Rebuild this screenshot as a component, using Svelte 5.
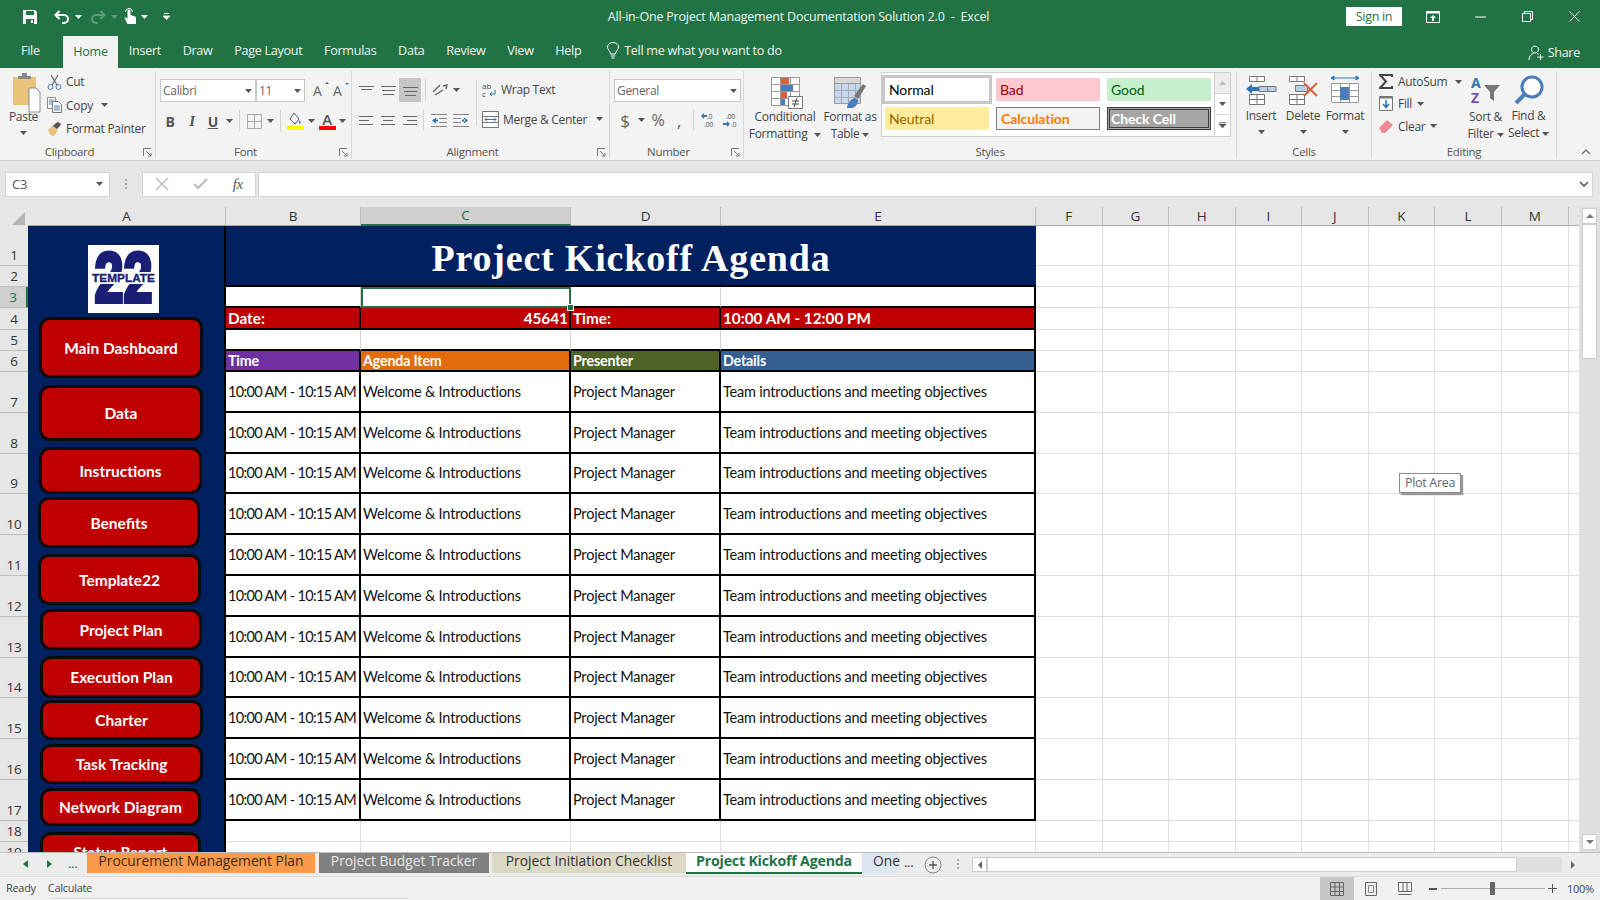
<script>
  const colW = [198, 135, 210, 150, 315, 66.5, 66.5, 66.5, 66.5, 66.5, 66.5, 67, 66.5, 11];
  const colNames = ['A', 'B', 'C', 'D', 'E', 'F', 'G', 'H', 'I', 'J', 'K', 'L', 'M', ''];
  const rowH = [40, 21, 21, 22, 21, 21, ...Array(11).fill(40.8), 21, 21];
  const gridCols = `28px ${colW.map((w) => w + 'px').join(' ')}`;
  const gridRows = `19px ${rowH.map((h) => h + 'px').join(' ')}`;

  const nav = [
    { label: 'Main Dashboard', top: 316, bottom: 377, left: 39, right: 203 },
    { label: 'Data', top: 384, bottom: 440, left: 39, right: 203 },
    { label: 'Instructions', top: 446, bottom: 493, left: 39, right: 202 },
    { label: 'Benefits', top: 496, bottom: 547, left: 38, right: 200 },
    { label: 'Template22', top: 553, bottom: 604, left: 38, right: 201 },
    { label: 'Project Plan', top: 608, bottom: 649, left: 40, right: 202 },
    { label: 'Execution Plan', top: 655, bottom: 697, left: 40, right: 203 },
    { label: 'Charter', top: 699, bottom: 739, left: 40, right: 203 },
    { label: 'Task Tracking', top: 743, bottom: 783, left: 40, right: 203 },
    { label: 'Network Diagram', top: 787, bottom: 825, left: 40, right: 201 },
    { label: 'Status Report', top: 831, bottom: 871, left: 40, right: 201 }
  ];
  const navStyle = (b, i) => {
    const prev = i ? nav[i - 1].bottom : 312;
    return `margin:${b.top - prev}px 0 0 ${b.left - 28}px;width:${b.right - b.left}px;height:${b.bottom - b.top}px`;
  };

  const agenda = Array.from({ length: 11 }, (_, i) => i + 8);
  const rows = Array.from({ length: 19 }, (_, i) => i + 2);
  const cols = Array.from({ length: 14 }, (_, i) => i + 2);
  const at = (r, c) => `grid-area:${r}/${c}`;
  const tabs = ['File', 'Home', 'Insert', 'Draw', 'Page Layout', 'Formulas', 'Data', 'Review', 'View', 'Help'];
</script>

{#snippet caret(color = '#555')}
  <svg class="caret" width="7" height="4" viewBox="0 0 7 4"><path d="M0 0h7L3.500 4z" fill={color} /></svg>
{/snippet}

{#snippet launcher()}
  <svg class="launch" width="9" height="9" viewBox="0 0 9 9"><path d="M.5 8V.5H8M3 3l5 5M8 5v3H5" fill="none" stroke="#777" /></svg>
{/snippet}

<div class="app">
  <header class="titlebar">
    <div class="qat">
      <svg class="q-save" width="16" height="16" viewBox="0 0 16 16"><path d="M1 1h12l2 2v12H1z" fill="#fff" /><path d="M4 2h8v4H4zM4 10h8v5H4z" fill="#217346" /><path d="M9 11h2v3H9z" fill="#fff" /></svg>
      <svg class="q-undo" width="16" height="14" viewBox="0 0 16 14"><path d="M5.500 1 1.500 5l4 4M2 5h8a4 4 0 0 1 0 8H8" fill="none" stroke="#fff" stroke-width="2" /></svg>
      {@render caret('#fff')}
      <svg class="q-redo" width="16" height="14" viewBox="0 0 16 14"><path d="M10.500 1l4 4-4 4M14 5H6a4 4 0 0 0 0 8h2" fill="none" stroke="#5c9c7c" stroke-width="2" /></svg>
      {@render caret('#5c9c7c')}
      <svg class="q-touch" width="12" height="17" viewBox="0 0 12 17"><path d="M3.500 16 .5 10l1-1 2 2V3a1.500 1.500 0 0 1 3 0v4l4 1.200c1 .3 1.500 1 1.500 2V16z" fill="#fff" /><path d="M1.500 4a3.500 3.500 0 0 1 7 0" fill="none" stroke="#fff" /></svg>
      {@render caret('#fff')}
      <svg class="q-more" width="7" height="7" viewBox="0 0 7 7"><path d="M1 .5h5M0 3h7L3.500 6.500z" stroke="#fff" fill="#fff" stroke-width=".8" /></svg>
    </div>
    <div class="doc">All-in-One Project Management Documentation Solution 2.0 &nbsp;-&nbsp; Excel</div>
    <div class="signin">Sign in</div>
    <svg class="ctl display" width="14" height="12" viewBox="0 0 14 12"><path d="M.5.500h13v11H.5z" fill="none" stroke="#fff" /><path d="M.5.500h13v2H.5zM7 4l3 3H8v3H6V7H4z" fill="#fff" /></svg>
    <svg class="ctl min" width="11" height="2" viewBox="0 0 11 2"><path d="M0 1h11" stroke="#fff" /></svg>
    <svg class="ctl restore" width="11" height="11" viewBox="0 0 11 11"><path d="M.5 2.500h8v8h-8zM2.500 2.500v-2h8v8h-2" fill="none" stroke="#fff" /></svg>
    <svg class="ctl close" width="11" height="11" viewBox="0 0 11 11"><path d="M.5.500l10 10M10.500.5l-10 10" stroke="#fff" /></svg>
  </header>

  <nav class="tabsrow">
    {#each tabs as t}
      <div class="rtab" class:on={t === 'Home'}>{t}</div>
    {/each}
    <svg class="bulb" width="12" height="17" viewBox="0 0 12 17"><path d="M3.500 12c0-3-3-4-3-7a5.500 4.500 0 0 1 11 0c0 3-3 4-3 7zM4 14h4M4.500 16h3" fill="none" stroke="#fff" /></svg>
    <div class="tell">Tell me what you want to do</div>
    <div class="share">
      <svg width="17" height="16" viewBox="0 0 17 16"><path d="M1 15c0-4 2-6 4.500-6.500M7 1a3.500 3.500 0 1 0 .01 0M9 8.500l1.500.7M12.500 9v6M9.500 12h6" fill="none" stroke="#fff" /></svg>
      Share
    </div>
  </nav>

  <section class="ribbon">
    <div class="group g-clip">
      <div class="body clip-body">
        <div class="paste">
          <svg width="29" height="40" viewBox="0 0 29 40"><path d="M1 4h23v28H1z" fill="#eac37c" /><path d="M6 3h4V0h5v3h4v3H6z" fill="#8a8a8a" /><path d="M17 15h7l4 4v20H17z" fill="#fff" stroke="#8c8c8c" /></svg>
          <span>Paste</span>
          {@render caret()}
        </div>
        <div class="clip-list">
          <div class="clip-item"><svg width="15" height="16" viewBox="0 0 15 16"><path d="M4 1l6 10M11 1L5 11" stroke="#666" stroke-width="1.200" /><circle cx="3.500" cy="13" r="2.500" fill="none" stroke="#4a7ebb" /><circle cx="11.500" cy="13" r="2.500" fill="none" stroke="#4a7ebb" /></svg>Cut</div>
          <div class="clip-item copy"><svg width="15" height="16" viewBox="0 0 15 16"><path d="M.5.500h8v11h-8z" fill="#fff" stroke="#8c8c8c" /><path d="M5.500 4.500h6l3 3v8h-9z" fill="#fff" stroke="#777" /><path d="M7 9h6M7 11h6M7 13h6M2 3h5M2 5h3M2 7h3" stroke="#4a7ebb" /></svg>Copy {@render caret()}</div>
          <div class="clip-item"><svg width="15" height="16" viewBox="0 0 15 16"><path d="M1 9l5-5 5 5-4 6H5l-1-2-1 1z" fill="#eac37c" /><path d="M6 5l3-3 2-1 3 2-1 2-3 3z" fill="#555" /></svg>Format Painter</div>
        </div>
      </div>
      <div class="label lp">Clipboard</div>
      {@render launcher()}
    </div>

    <div class="group g-font">
      <div class="body">
        <div class="row r1">
          <div class="combo font-name">Calibri {@render caret()}</div>
          <div class="combo font-size">11 {@render caret()}</div>
          <div class="ab up">A<i></i></div>
          <div class="ab down">A<i></i></div>
        </div>
        <div class="row r2">
          <b class="tb w22">B</b>
          <em class="tb w22">I</em>
          <span class="tb w20 under">U</span>
          <span class="tb w12">{@render caret()}</span>
          <span class="vsep"></span>
          <span class="tb w20"><svg width="15" height="15" viewBox="0 0 15 15"><path d="M.5.500h14v14H.5zM7.500.5v14M.5 7.500h14" fill="none" stroke="#aaa" /></svg></span>
          <span class="tb w12">{@render caret()}</span>
          <span class="vsep"></span>
          <span class="tb w20"><svg width="17" height="18" viewBox="0 0 17 18"><path d="M7 1l5 6-4 5-5-5z" fill="#fff" stroke="#555" /><path d="M12 8c1 1 2 2 1.500 3.500S11 11 12 8z" fill="#4a7ebb" /><path d="M0 14h17v4H0z" fill="#ffff00" /></svg></span>
          <span class="tb w12">{@render caret()}</span>
          <span class="tb w20 color-a"><span>A</span><i></i></span>
          <span class="tb w10">{@render caret()}</span>
        </div>
      </div>
      <div class="label lp">Font</div>
      {@render launcher()}
    </div>

    <div class="group g-align">
      <div class="body align-body">
        <div class="align-cols">
          <div class="row a1">
            <span class="tb w22"><svg width="15" height="9" viewBox="0 0 15 9"><path d="M0 .5h15M2 3.500h11" stroke="#666" /></svg></span>
            <span class="tb w22"><svg width="15" height="9" viewBox="0 0 15 9"><path d="M0 .5h15M1 4.500h13M2 8.500h11" stroke="#666" /></svg></span>
            <span class="tb w22 sel"><svg width="15" height="11" viewBox="0 0 15 11"><path d="M0 2.500h15M1 6.500h13M2 10.500h11" stroke="#666" /></svg></span>
            <span class="vsep"></span>
            <span class="tb w20"><svg width="16" height="14" viewBox="0 0 16 14"><path d="M1 9l7-7M3 12l8-5M11 3l4-1-1 4" fill="none" stroke="#666" stroke-width="1.400" /></svg></span>
            <span class="tb w12">{@render caret()}</span>
          </div>
          <div class="row a2">
            <span class="tb w22"><svg width="14" height="9" viewBox="0 0 14 9"><path d="M0 .5h14M0 4.500h10M0 8.500h14" stroke="#666" /></svg></span>
            <span class="tb w22"><svg width="14" height="9" viewBox="0 0 14 9"><path d="M0 .5h14M2 4.500h10M0 8.500h14" stroke="#666" /></svg></span>
            <span class="tb w22"><svg width="14" height="9" viewBox="0 0 14 9"><path d="M0 .5h14M4 4.500h10M0 8.500h14" stroke="#666" /></svg></span>
            <span class="vsep tight"></span>
            <span class="tb w22"><svg width="16" height="13" viewBox="0 0 16 13"><path d="M0 .5h16M8 4.500h8M8 8.500h8M0 12.500h16" stroke="#888" /><path d="M1 6.500l4-3v6zM4 5.500h3v2H4z" fill="#2e75b6" /></svg></span>
            <span class="tb w22"><svg width="16" height="13" viewBox="0 0 16 13"><path d="M0 .5h16M0 4.500h8M0 8.500h8M0 12.500h16" stroke="#888" /><path d="M15 6.500l-4-3v6zM9 5.500h3v2H9z" fill="#2e75b6" /></svg></span>
          </div>
        </div>
        <span class="vsep tall"></span>
        <div class="wrapcol">
          <div class="row-text w1">
            <svg width="15" height="17" viewBox="0 0 15 17"><text x="0" y="8" class="tiny">ab</text><text x="0" y="16" class="tiny">c</text><path d="M13 9v4H8M10 11l-2 2 2 2" fill="none" stroke="#2e75b6" /></svg>
            Wrap Text
          </div>
          <div class="row-text w2">
            <svg width="17" height="17" viewBox="0 0 17 17"><path d="M.5.500h16v16H.5zM.5 5.500h16M.5 11.500h16" fill="#fff" stroke="#777" /><path d="M3 8.500h11M3 8.500l2-2M3 8.500l2 2M14 8.500l-2-2M14 8.500l-2 2" fill="none" stroke="#2e75b6" /></svg>
            Merge &amp; Center {@render caret()}
          </div>
        </div>
      </div>
      <div class="label lp">Alignment</div>
      {@render launcher()}
    </div>

    <div class="group g-num">
      <div class="body">
        <div class="row r1"><div class="combo num-combo">General {@render caret()}</div></div>
        <div class="row r2 num-row">
          <span class="tb w20 big">$</span>
          <span class="tb w12">{@render caret()}</span>
          <span class="tb w22 big pct">%</span>
          <span class="tb w20 big">,</span>
          <span class="vsep"></span>
          <span class="tb w22"><svg width="17" height="16" viewBox="0 0 17 16"><text x="6" y="7" class="tiny2">.0</text><text x="3" y="15" class="tiny2">.00</text><path d="M0 4l3-3v2h3v2H3v2z" fill="#2e75b6" /></svg></span>
          <span class="tb w22"><svg width="17" height="16" viewBox="0 0 17 16"><text x="3" y="7" class="tiny2">.00</text><text x="8" y="15" class="tiny2">.0</text><path d="M7 12L4 9v2H0v2h4v2z" fill="#2e75b6" /></svg></span>
        </div>
      </div>
      <div class="label lp">Number</div>
      {@render launcher()}
    </div>

    <div class="group g-styles">
      <div class="body styles-body">
        <div class="bigbtn cf">
          <svg width="32" height="32" viewBox="0 0 32 32"><path d="M.5.500h28v28H.5zM.5 7.500h28M.5 14.500h28M.5 21.500h28M9.500.5v28M19.500.5v28" fill="#fff" stroke="#999" /><path d="M10 1h8v6h-8zM10 15h6v6h-6z" fill="#d9603b" /><path d="M10 8h12v6H10zM10 22h4v6h-4z" fill="#4a7ebb" /><path d="M17.500 19.500h14v12h-14z" fill="#fff" stroke="#777" /><path d="M21 24h7M21 27h7M23 30l3-9" stroke="#444" /></svg>
          <span>Conditional<br />Formatting {@render caret()}</span>
        </div>
        <div class="bigbtn ft">
          <svg width="32" height="32" viewBox="0 0 32 32"><path d="M.5.500h26v26H.5z" fill="#c5d9ee" stroke="#999" /><path d="M.5 6.500h26M.5 13.500h26M.5 20.500h26M7.500.5v26M14.500.5v26M21.500.5v26" fill="none" stroke="#aaa" /><path d="M.5.500h26v6H.5z" fill="#d8d8d8" stroke="#999" /><path d="M20 19l9-12 3 2-8 13z" fill="#777" /><path d="M13 31c0-5 4-9 8-10l3 2c0 4-3 8-6 8z" fill="#4a7ebb" /></svg>
          <span>Format as<br />Table {@render caret()}</span>
        </div>
        <div class="gallery">
          <div class="swatches">
            <div class="st s-normal">Normal</div>
            <div class="st s-bad">Bad</div>
            <div class="st s-good">Good</div>
            <div class="st s-neutral">Neutral</div>
            <div class="st s-calc">Calculation</div>
            <div class="st s-check">Check Cell</div>
          </div>
          <div class="scroller">
            <span class="sc s1"><svg width="7" height="4" viewBox="0 0 7 4"><path d="M0 4h7L3.500 0z" fill="#bbb" /></svg></span>
            <span class="sc s2">{@render caret()}</span>
            <span class="sc s3"><svg width="7" height="6" viewBox="0 0 7 6"><path d="M0 .5h7M0 2h7L3.500 6z" stroke="#555" stroke-width=".6" fill="#555" /></svg></span>
          </div>
        </div>
      </div>
      <div class="label">Styles</div>
    </div>

    <div class="group g-cells">
      <div class="body cells-body">
        <div class="cellbtn">
          <svg width="31" height="30" viewBox="0 0 31 30"><path d="M3.500 1.500h15v5h-15zM3.500 19.500h15v10h-15zM11 1.500v5M11 19.500v10M3.500 24.500h15" fill="#fff" stroke="#777" /><path d="M13 11.500h17v5H13z" fill="#b8cfe8" stroke="#777" /><path d="M21.500 11.500v5" stroke="#777" /><path d="M0 14l6-5v3h7v4H6v3z" fill="#2e75b6" /></svg>
          <span>Insert</span>{@render caret()}
        </div>
        <div class="cellbtn">
          <svg width="31" height="30" viewBox="0 0 31 30"><path d="M1.500 1.500h15v5h-15zM1.500 19.500h15v10h-15zM9 1.500v5M9 19.500v10M1.500 24.500h15" fill="#fff" stroke="#777" /><path d="M7.500 10.500h12v6h-12z" fill="#b8cfe8" stroke="#777" /><path d="M16 8l13 13M29 8L16 21" stroke="#d9603b" stroke-width="2" /></svg>
          <span>Delete</span>{@render caret()}
        </div>
        <div class="cellbtn">
          <svg width="30" height="30" viewBox="0 0 30 30"><path d="M1 3h28M1 3l3-2v4zM29 3l-3-2v4z" stroke="#2e75b6" fill="#2e75b6" /><path d="M1.500 8.500h27v19h-27zM1.500 15.500h27M1.500 21.500h27M10.500 8.500v19M19.500 8.500v19" fill="#fff" stroke="#999" /><path d="M10 12h9v13h-9z" fill="#4a7ebb" /></svg>
          <span>Format</span>{@render caret()}
        </div>
      </div>
      <div class="label">Cells</div>
    </div>

    <div class="group g-edit">
      <div class="body edit-body">
        <div class="edit-list">
          <div class="edit-item e1"><svg width="14" height="15" viewBox="0 0 14 15"><path d="M13 3V1H1l6 6.500L1 14h12v-2" fill="none" stroke="#444" stroke-width="2" /></svg>AutoSum <span class="push">{@render caret()}</span></div>
          <div class="edit-item"><svg width="14" height="15" viewBox="0 0 14 15"><path d="M.5.500h13v14H.5z" fill="#fff" stroke="#777" /><path d="M.5.500h13v2H.5z" fill="#777" /><path d="M7 4v7M4 8l3 3.500L10 8" fill="none" stroke="#2e75b6" stroke-width="1.600" /></svg>Fill {@render caret()}</div>
          <div class="edit-item"><svg width="14" height="13" viewBox="0 0 14 13"><path d="M0 8l8-8 6 5-8 8H3z" fill="#f08a96" /></svg>Clear {@render caret()}</div>
        </div>
        <div class="bigbtn sort">
          <svg width="30" height="30" viewBox="0 0 30 30"><text x="0" y="12" class="az a">A</text><text x="0" y="27" class="az z">Z</text><path d="M13 9h16l-6 7v9l-4-3v-6z" fill="#777" /></svg>
          <span>Sort &amp;<br />Filter {@render caret()}</span>
        </div>
        <div class="bigbtn find">
          <svg width="32" height="30" viewBox="0 0 32 30"><circle cx="19" cy="12" r="10" fill="#fff" stroke="#4a7ebb" stroke-width="3" /><path d="M12 19L3 28" stroke="#4a7ebb" stroke-width="4" /></svg>
          <span>Find &amp;<br />Select {@render caret()}</span>
        </div>
      </div>
      <div class="label">Editing</div>
    </div>
    <svg class="collapse" width="10" height="6" viewBox="0 0 10 6"><path d="M1 5l4-4 4 4" fill="none" stroke="#666" stroke-width="1.200" /></svg>
  </section>

  <div class="formula">
    <div class="namebox">C3 {@render caret()}</div>
    <div class="dots"></div>
    <div class="fnbox">
      <svg width="14" height="14" viewBox="0 0 14 14"><path d="M1 1l12 12M13 1L1 13" stroke="#bbb" stroke-width="1.500" /></svg>
      <svg width="15" height="12" viewBox="0 0 15 12"><path d="M1 6l4 4 9-9" fill="none" stroke="#bbb" stroke-width="2" /></svg>
      <span class="fx">fx</span>
    </div>
    <div class="entry"><svg width="10" height="6" viewBox="0 0 10 6"><path d="M1 1l4 4 4-4" fill="none" stroke="#555" stroke-width="1.600" /></svg></div>
  </div>

  <main class="sheetwrap">
    <div class="sheet" style="grid-template-columns:{gridCols};grid-template-rows:{gridRows}">
      <div class="corner"><svg width="13" height="13" viewBox="0 0 13 13"><path d="M13 0v13H0z" fill="#b4b4b4" /></svg></div>
      {#each colNames as name, i}
        <div class="colh" class:sel={name === 'C'} class:last={name === ''} style={at(1, i + 2)}>{name}</div>
      {/each}
      {#each rows as r}
        <div class="rowh" class:sel={r === 4} style={at(r, 1)}>{r - 1}</div>
        {#each cols as c}
          <div class="grid" style={at(r, c)}></div>
        {/each}
      {/each}

      <aside class="side">
        <div class="logo">
          <svg width="71" height="68" viewBox="0 0 71 68">
            <text x="35.500" y="57" class="logo22" textLength="58" lengthAdjust="spacingAndGlyphs">22</text>
            <rect x="0" y="27" width="71" height="12" fill="#fff" />
            <text x="35.500" y="37" class="logotxt" textLength="63" lengthAdjust="spacingAndGlyphs">TEMPLATE</text>
          </svg>
        </div>
        {#each nav as b, i}
          <div class="navbtn" style={navStyle(b, i)}>{b.label}</div>
        {/each}
      </aside>

      <div class="banner">Project Kickoff Agenda</div>
      <div class="wh top3 c-b"></div>
      <div class="wh top3 c-c"><i class="handle"></i></div>
      <div class="wh top3 c-d plain"></div>
      <div class="wh top3 c-e plain"></div>

      <div class="bar c-b">Date:</div>
      <div class="bar c-c right">45641</div>
      <div class="bar c-d">Time:</div>
      <div class="bar c-e">10:00 AM - 12:00 PM</div>

      <div class="wh r5 c-b"></div>
      <div class="wh r5 c-c"></div>
      <div class="wh r5 c-d"></div>
      <div class="wh r5 c-e"></div>

      <div class="hd c-b purple">Time</div>
      <div class="hd c-c orange">Agenda Item</div>
      <div class="hd c-d olive">Presenter</div>
      <div class="hd c-e blue">Details</div>

      {#each agenda as r}
        <div class="td tm" style={at(r, 3)}>10:00 AM - 10:15 AM</div>
        <div class="td" style={at(r, 4)}>Welcome &amp; Introductions</div>
        <div class="td" style={at(r, 5)}>Project Manager</div>
        <div class="td" style={at(r, 6)}>Team introductions and meeting objectives</div>
      {/each}
    </div>
    <div class="vscroll">
      <span class="vbtn"><svg width="8" height="4" viewBox="0 0 8 4"><path d="M0 4h8L4 0z" fill="#777" /></svg></span>
      <span class="vthumb"></span>
      <span class="vbtn down"><svg width="8" height="4" viewBox="0 0 8 4"><path d="M0 0h8L4 4z" fill="#777" /></svg></span>
    </div>
    <div class="tip">Plot Area</div>
  </main>

  <div class="sheettabs">
    <div class="tabnav">
      <svg width="5" height="8" viewBox="0 0 5 8"><path d="M5 0v8L0 4z" fill="#217346" /></svg>
      <svg width="5" height="8" viewBox="0 0 5 8"><path d="M0 0v8l5-4z" fill="#217346" /></svg>
      <span>...</span>
    </div>
    <div class="stab t-proc">Procurement Management Plan</div>
    <div class="stab t-budget">Project Budget Tracker</div>
    <div class="stab t-init">Project Initiation Checklist</div>
    <div class="stab t-kick">Project Kickoff Agenda</div>
    <div class="stab t-one">One</div>
    <div class="tabmore">...</div>
    <svg class="addtab" width="18" height="18" viewBox="0 0 18 18"><circle cx="9" cy="9" r="8" fill="none" stroke="#888" /><path d="M9 5v8M5 9h8" stroke="#555" stroke-width="1.300" /></svg>
    <div class="vdots"></div>
    <div class="hscroll">
      <span class="hbtn"><svg width="4" height="8" viewBox="0 0 4 8"><path d="M4 0v8L0 4z" fill="#666" /></svg></span>
      <span class="hthumb"></span>
      <span class="htrack"></span>
      <span class="hbtn right"><svg width="4" height="8" viewBox="0 0 4 8"><path d="M0 0v8l4-4z" fill="#666" /></svg></span>
    </div>
  </div>

  <footer class="status">
    <span class="ready">Ready</span>
    <span class="calc">Calculate</span>
    <div class="views">
      <span class="view on"><svg width="14" height="14" viewBox="0 0 14 14"><path d="M.5.500h13v13H.5zM5 .5v13M9.500.5v13M.5 5h13M.5 9.500h13" fill="none" stroke="#666" /></svg></span>
      <span class="view"><svg width="14" height="14" viewBox="0 0 14 14"><path d="M1.500.500h11v13h-11z" fill="none" stroke="#666" /><path d="M4.500 3.500h5v7h-5z" fill="none" stroke="#888" /></svg></span>
      <span class="view"><svg width="14" height="14" viewBox="0 0 14 14"><path d="M.5.500h13v9H.5zM5 .5v9M9 .5v9M.5 12.500h13" fill="none" stroke="#666" /></svg></span>
    </div>
    <div class="zoom">
      <i class="minus"></i>
      <span class="slider"><i></i></span>
      <svg width="9" height="9" viewBox="0 0 9 9"><path d="M4.500 0v9M0 4.500h9" stroke="#555" /></svg>
      <span class="pct100">100%</span>
    </div>
    <i class="strip"></i>
  </footer>
</div>

<style>
  :global(body) {
    margin: 0;
    background: #fff;
  }
  .app {
    width: 1600px;
    height: 900px;
    display: flex;
    flex-direction: column;
    overflow: hidden;
    font-family: 'Open Sans', 'Liberation Sans', sans-serif;
    font-size: 12px;
    letter-spacing: -0.3px;
    color: #444;
    position: relative;
  }
  svg {
    display: block;
    flex: none;
  }
  .caret {
    display: inline-block;
    vertical-align: middle;
  }

  /* title bar */
  .titlebar {
    height: 33px;
    background: #217346;
    display: flex;
    align-items: center;
    color: #fff;
    flex: none;
  }
  .qat {
    display: flex;
    align-items: center;
    width: 380px;
  }
  .q-save { margin-left: 22px; }
  .q-undo { margin-left: 16px; }
  .qat .caret { margin-left: 5px; }
  .q-redo { margin-left: 8px; }
  .q-touch { margin-left: 6px; }
  .q-more { margin-left: 15px; }
  .doc {
    width: 844px;
    text-align: center;
    font-size: 12.500px;
    letter-spacing: -0.2px;
    padding-right: 7px;
    box-sizing: border-box;
    color: #f2f7f4;
  }
  .signin {
    width: 56px;
    height: 19px;
    margin-left: 122px;
    background: #fff;
    color: #217346;
    text-align: center;
    line-height: 19px;
    font-size: 12.500px;
  }
  .ctl { margin-left: 24px; }
  .display { margin-left: 24px; }
  .min { margin-left: 35px; }
  .restore { margin-left: 36px; }
  .close { margin-left: 36px; }

  /* ribbon tabs */
  .tabsrow {
    height: 35px;
    background: #217346;
    display: flex;
    align-items: center;
    color: #eef5f1;
    font-size: 12.600px;
    flex: none;
  }
  .rtab {
    height: 100%;
    padding: 0 10.850px;
    display: flex;
    align-items: center;
    box-sizing: border-box;
  }
  .rtab:first-child { padding: 0 15px 0 21px; width: 63px; box-sizing: border-box; }
  .rtab.on {
    background: #f3f3f3;
    color: #217346;
    width: 55px;
    justify-content: center;
    padding: 0 0 1px;
    margin-top: 3px;
    height: 32px;
  }
  .bulb { margin-left: 15px; }
  .tell { margin-left: 5px; }
  .share {
    margin-left: auto;
    margin-right: 20px;
    display: flex;
    align-items: center;
    gap: 3px;
    padding-top: 4px;
  }

  /* ribbon */
  .ribbon {
    height: 93px;
    background: #f3f3f3;
    border-bottom: 1px solid #cfcfcf;
    box-sizing: border-box;
    display: flex;
    flex: none;
    padding-top: 3px;
    position: relative;
  }
  .group {
    height: 88px;
    display: flex;
    flex-direction: column;
    border-right: 1px solid #d8d8d8;
    box-sizing: border-box;
    position: relative;
    flex: none;
  }
  .body {
    height: 73px;
    box-sizing: border-box;
  }
  .label {
    text-align: center;
    font-size: 11.500px;
    line-height: 15px;
    color: #555;
  }
  .lp { padding-right: 16px; }
  .launch {
    position: absolute;
    right: 3px;
    bottom: 2px;
  }
  .g-clip { width: 156px; }
  .g-font { width: 196px; }
  .g-align { width: 258px; }
  .g-num { width: 134px; }
  .g-styles { width: 493px; }
  .g-cells { width: 135px; }
  .g-edit { width: 185px; }
  .collapse {
    position: absolute;
    left: 1581px;
    top: 81px;
  }

  .clip-body { display: flex; }
  .paste {
    width: 47px;
    padding-top: 2px;
    display: flex;
    flex-direction: column;
    align-items: center;
  }
  .paste svg:first-child { margin-left: 6px; }
  .paste span { margin-top: -4px; font-size: 12px; line-height: 16px; }
  .paste .caret { margin-top: 6px; }
  .clip-list {
    padding-top: 2px;
    display: flex;
    flex-direction: column;
    gap: 6.500px;
  }
  .clip-item {
    height: 17px;
    display: flex;
    align-items: center;
    gap: 4px;
    white-space: nowrap;
  }
  .copy .caret { margin-left: 4px; }

  .row {
    display: flex;
    align-items: center;
  }
  .r1 {
    padding-top: 8px;
    height: 23px;
    box-sizing: content-box;
  }
  .g-font .r1 { padding-left: 4px; }
  .g-font .r2 { padding-left: 3px; }
  .r2 { margin-top: 7px; height: 24px; }
  .combo {
    height: 23px;
    background: #fff;
    border: 1px solid #c6c6c6;
    box-sizing: border-box;
    display: flex;
    align-items: center;
    justify-content: space-between;
    padding: 0 3px 0 2px;
    color: #666;
  }
  .font-name { width: 96px; }
  .font-size { width: 49px; }
  .ab {
    font-size: 14px;
    color: #666;
    margin-left: 6px;
    width: 14px;
    position: relative;
  }
  .ab.up { margin-left: 8px; }
  .ab i {
    position: absolute;
    right: -2px;
    top: 2px;
    border: 2.500px solid transparent;
  }
  .up i { border-bottom-color: #2e75b6; top: -1px; }
  .down i { border-top-color: #2e75b6; }
  .tb {
    height: 24px;
    display: flex;
    align-items: center;
    justify-content: center;
    flex: none;
  }
  .w10 { width: 10px; }
  .w12 { width: 12px; }
  .w20 { width: 20px; }
  .w22 { width: 22px; }
  b.tb, em.tb, .under {
    font-size: 14px;
    color: #555;
  }
  b.tb { font-weight: 700; }
  em.tb { font-family: 'Liberation Serif', serif; font-weight: 700; font-size: 15px; }
  .under { text-decoration: underline; font-weight: 700; }
  .vsep {
    width: 1px;
    height: 22px;
    background: #d4d4d4;
    margin: 0 4px;
    flex: none;
  }
  .vsep.tight { margin: 0 4px 0 2px; }
  .tall { height: 46px; margin: 9px 0 0 0; }
  .color-a {
    flex-direction: column;
    font-size: 15px;
    font-weight: 600;
    color: #555;
    line-height: 14px;
  }
  .color-a i {
    width: 17px;
    height: 4px;
    background: #ff0000;
  }
  .align-body { display: flex; }
  .align-cols { width: 124px; padding-left: 3px; box-sizing: border-box; }
  .a1 { padding-top: 7px; height: 24px; box-sizing: content-box; }
  .a2 { margin-top: 6px; height: 24px; }
  .sel { background: #c6c6c6; }
  .wrapcol { padding: 6px 0 0 5px; }
  .row-text {
    display: flex;
    align-items: center;
    gap: 4px;
    white-space: nowrap;
    height: 24px;
  }
  .w2 { margin-top: 6px; }
  .w2 .caret { margin-left: 5px; }
  .g-num .r1 { padding-left: 4px; }
  .num-combo { width: 127px; }
  .num-row { padding-left: 5px; margin-top: 6px; }
  .big { font-size: 17px; color: #666; }
  .pct { margin-left: 0; font-size: 16px; }
  .tiny { font: 8px 'Open Sans', sans-serif; fill: #444; letter-spacing: 0; }
  .tiny2 { font: 7px 'Open Sans', sans-serif; fill: #555; }

  .styles-body { display: flex; }
  .bigbtn {
    display: flex;
    flex-direction: column;
    align-items: center;
    text-align: center;
    line-height: 17px;
  }
  .cf { width: 68px; margin-left: 7px; padding-top: 6px; }
  .ft { width: 64px; padding-top: 6px; margin-left: -1px; }
  .bigbtn span { margin-top: -1px; white-space: nowrap; }
  .cf svg { margin-left: 4px; }
  .gallery {
    width: 350px;
    height: 65px;
    margin: 1px 0 0 -1px;
    background: #fff;
    border: 1px solid #d0d0d0;
    box-sizing: border-box;
    display: flex;
  }
  .swatches {
    width: 334px;
    display: grid;
    grid-template-columns: 104px 104px 104px;
    grid-template-rows: 23px 23px;
    column-gap: 7px;
    row-gap: 6px;
    padding: 5px 0 0 3px;
    box-sizing: border-box;
  }
  .st {
    display: flex;
    align-items: center;
    padding-left: 4px;
    font-family: 'Lato', 'Liberation Sans', sans-serif;
    font-size: 14px;
    letter-spacing: -0.1px;
    box-sizing: border-box;
  }
  .s-normal { color: #000; background: #fff; outline: 3px solid #c6c6c6; outline-offset: 0; }
  .s-bad { background: #ffc7ce; color: #9c0006; }
  .s-good { background: #c6efce; color: #006100; }
  .s-neutral { background: #ffeb9c; color: #9c6500; }
  .s-calc { background: #f2f2f2; color: #fa7d00; font-weight: 700; border: 1px solid #7f7f7f; }
  .s-check { background: #a5a5a5; color: #fff; font-weight: 700; border: 3px double #3f3f3f; padding-left: 1px; }
  .scroller {
    width: 15px;
    display: flex;
    flex-direction: column;
    border-left: 1px solid #d0d0d0;
  }
  .sc {
    display: flex;
    align-items: center;
    justify-content: center;
    background: #fff;
    border-bottom: 1px solid #d8d8d8;
  }
  .s1 { height: 21px; background: #ececec; }
  .s2 { height: 20px; }
  .s3 { height: 22px; border-bottom: 0; }

  .cells-body { display: flex; padding: 4px 0 0 4px; }
  .cellbtn {
    width: 40px;
    margin-right: 2px;
    display: flex;
    flex-direction: column;
    align-items: center;
    line-height: 16px;
  }
  .cellbtn span { margin-top: 3px; }
  .cellbtn .caret { margin-top: 6px; }

  .edit-body { display: flex; }
  .edit-list {
    width: 92px;
    padding: 1px 0 0 7px;
    box-sizing: content-box;
    display: flex;
    flex-direction: column;
    gap: 4.500px;
  }
  .edit-item {
    height: 18px;
    display: flex;
    align-items: center;
    gap: 5px;
    white-space: nowrap;
  }
  .edit-item .push { margin-left: 3px; }
  .sort { width: 43px; padding-top: 5px; margin-left: -7px; }
  .find { width: 43px; padding-top: 4px; margin-left: 0; }
  .sort span, .find span { margin-top: 2px; }
  .az { font: 700 14px 'Open Sans', sans-serif; }
  .a { fill: #2e75b6; }
  .z { fill: #7b4fb0; }

  /* formula bar */
  .formula {
    height: 46px;
    background: #e6e6e6;
    display: flex;
    align-items: center;
    padding: 0 7px 0 5px;
    box-sizing: border-box;
    flex: none;
  }
  .namebox {
    width: 105px;
    height: 25px;
    background: #fff;
    border: 1px solid #d4d4d4;
    box-sizing: border-box;
    display: flex;
    align-items: center;
    justify-content: space-between;
    padding: 0 6px;
    font-size: 13px;
    color: #555;
  }
  .dots {
    width: 2px;
    height: 11px;
    margin: 0 15px 0 15px;
    background: repeating-linear-gradient(#aaa 0 2px, transparent 2px 4px);
  }
  .fnbox {
    width: 114px;
    height: 25px;
    background: #fff;
    border: 1px solid #d4d4d4;
    box-sizing: border-box;
    display: flex;
    align-items: center;
    justify-content: space-between;
    padding: 0 12px;
  }
  .fx {
    font-family: 'Liberation Serif', serif;
    font-style: italic;
    font-size: 15px;
    color: #555;
  }
  .entry {
    flex: 1;
    height: 25px;
    background: #fff;
    border: 1px solid #d4d4d4;
    box-sizing: border-box;
    margin-left: 2px;
    display: flex;
    align-items: center;
    justify-content: flex-end;
    padding-right: 3px;
  }

  /* sheet */
  .sheetwrap {
    height: 645px;
    display: flex;
    position: relative;
    background: #e6e6e6;
    flex: none;
  }
  .sheet {
    width: 1579px;
    display: grid;
    overflow: hidden;
    font-family: 'Lato', 'Liberation Sans', sans-serif;
    font-size: 14.500px;
    letter-spacing: -0.2px;
    color: #111;
    background: #fff;
  }
  .corner {
    grid-area: 1 / 1;
    background: #e6e6e6;
    padding: 5px 0 0 12px;
    box-sizing: border-box;
  }
  .colh {
    background: #e6e6e6;
    border-right: 1px solid #bcbcbc;
    border-bottom: 1px solid #ababab;
    display: flex;
    align-items: center;
    justify-content: center;
    padding-bottom: 1px;
    box-sizing: border-box;
    font-family: 'Open Sans', sans-serif;
    font-size: 13.500px;
    color: #333;
  }
  .colh.last { border-right: 0; }
  .colh.sel {
    background: #cfcfcf;
    color: #217346;
    border-bottom: 2px solid #217346;
  }
  .rowh {
    background: #e6e6e6;
    border-bottom: 1px solid #bcbcbc;
    display: flex;
    align-items: flex-end;
    justify-content: center;
    font-family: 'Open Sans', sans-serif;
    font-size: 13.500px;
    line-height: 20px;
    color: #333;
  }
  .rowh.sel {
    background: #cfcfcf;
    color: #217346;
    border-right: 2px solid #217346;
  }
  .grid {
    border-right: 1px solid #dedede;
    border-bottom: 1px solid #dedede;
  }
  .side {
    grid-area: 2 / 2 / -1 / 3;
    background: #002060;
    display: flex;
    flex-direction: column;
    min-height: 0;
    height: 627px;
    overflow: hidden;
    border-right: 2px solid #000;
    box-sizing: border-box;
    border-top: 0;
  }
  .logo {
    width: 71px;
    height: 68px;
    margin: 19px 0 0 60px;
    background: #fff;
    flex: none;
    overflow: hidden;
  }
  .logo22 {
    font: 700 70px 'Liberation Sans', sans-serif;
    fill: #1a1f75;
    stroke: #1a1f75;
    stroke-width: 4px;
    text-anchor: middle;
    letter-spacing: 0;
  }
  .logotxt {
    font: 700 10px 'Liberation Sans', sans-serif;
    fill: #1a1f75;
    stroke: #1a1f75;
    stroke-width: .3px;
    text-anchor: middle;
    letter-spacing: 0;
  }
  .navbtn {
    flex: none;
    background: #c00000;
    border: 3px solid #0c0c0c;
    border-radius: 11px;
    box-sizing: border-box;
    display: flex;
    align-items: center;
    justify-content: center;
    color: #fff;
    font-weight: 700;
    font-size: 15.500px;
    letter-spacing: 0;
  }
  .banner {
    grid-area: 2 / 3 / 4 / 7;
    background: #002060;
    border-bottom: 2px solid #000;
    display: flex;
    align-items: center;
    justify-content: center;
    color: #fff;
    padding-top: 5px;
    font-family: 'Liberation Serif', serif;
    font-weight: 700;
    font-size: 38px;
    letter-spacing: 0.8px;
  }
  .c-b { grid-column: 3; }
  .c-c { grid-column: 4; }
  .c-d { grid-column: 5; }
  .c-e { grid-column: 6; }
  .wh {
    background: #fff;
    border-right: 1px solid #d4d4d4;
    position: relative;
  }
  .top3 { grid-row: 4; border-bottom: 2px solid #000; }
  .top3.c-e { border-right: 2px solid #000; }
  .top3.c-c {
    outline: 2px solid #217346;
    outline-offset: -2px;
    z-index: 2;
    border: 0;
  }
  .handle {
    position: absolute;
    right: -3px;
    bottom: -3px;
    width: 5px;
    height: 5px;
    background: #217346;
    border: 1px solid #fff;
    box-sizing: content-box;
  }
  .r5 { grid-row: 6; border-bottom: 2px solid #000; }
  .r5.c-e { border-right: 2px solid #000; }
  .bar {
    grid-row: 5;
    background: #c00000;
    color: #fff;
    font-weight: 700;
    font-size: 15.300px;
    letter-spacing: 0;
    display: flex;
    align-items: center;
    padding-left: 2px;
    border-right: 2px solid #000;
    border-bottom: 2px solid #000;
  }
  .bar.right { justify-content: flex-end; padding-right: 1px; }
  .hd {
    grid-row: 7;
    color: #fff;
    font-weight: 700;
    font-size: 14.300px;
    display: flex;
    align-items: center;
    padding-left: 2px;
    border-right: 2px solid #000;
    border-bottom: 2px solid #000;
  }
  .purple { background: #7030a0; }
  .orange { background: #e26b0a; }
  .olive { background: #4f6228; }
  .blue { background: #366092; }
  .td {
    background: #fff;
    display: flex;
    align-items: center;
    padding-left: 2px;
    border-right: 2px solid #000;
    border-bottom: 2px solid #000;
    white-space: nowrap;
    overflow: hidden;
  }
  .tm { letter-spacing: -0.65px; }

  .vscroll {
    width: 21px;
    display: flex;
    flex-direction: column;
    align-items: center;
    background: #e0e0e0;
  }
  .vbtn {
    width: 15px;
    height: 16px;
    background: #fff;
    border: 1px solid #ccc;
    box-sizing: border-box;
    display: flex;
    align-items: center;
    justify-content: center;
    margin-top: 1px;
  }
  .vthumb {
    width: 15px;
    height: 135px;
    background: #fff;
    border: 1px solid #ccc;
    box-sizing: border-box;
  }
  .vbtn.down { margin-top: auto; margin-bottom: 2px; }
  .tip {
    position: absolute;
    left: 1399px;
    top: 266px;
    width: 62px;
    height: 20px;
    background: #fff;
    border: 1px solid #8c8c8c;
    box-shadow: 2px 2px 1px #999;
    box-sizing: border-box;
    text-align: center;
    line-height: 18px;
    color: #666;
    font-size: 12.500px;
  }

  /* sheet tabs */
  .sheettabs {
    height: 24px;
    background: #ececec;
    border-top: 1px solid #bdbdbd;
    box-sizing: border-box;
    display: flex;
    align-items: flex-start;
    flex: none;
  }
  .tabnav {
    width: 87px;
    height: 22px;
    display: flex;
    align-items: center;
    padding-left: 23px;
    gap: 19px;
    box-sizing: border-box;
    color: #217346;
  }
  .tabnav span { font-size: 13px; margin-left: -3px; margin-top: -3px; }
  .stab {
    height: 20px;
    padding-bottom: 6px;
    display: flex;
    align-items: center;
    justify-content: center;
    box-sizing: border-box;
    font-size: 13.800px;
    letter-spacing: 0;
    white-space: nowrap;
  }
  .t-proc { width: 228px; background: #fb9a4a; color: #3c2a14; margin-right: 4px; }
  .t-budget { width: 170px; background: #808080; color: #e8e8e8; margin-right: 3px; }
  .t-init { width: 194px; background: #ddd9c4; color: #333; }
  .t-kick { width: 176px; background: #fff; color: #217346; font-weight: 700; height: 21px; border-bottom: 2px solid #217346; font-size: 14.200px; letter-spacing: -0.2px; padding-bottom: 5px; }
  .t-one { width: 36px; background: #dce6f1; color: #333; justify-content: flex-start; padding-left: 11px; }
  .tabmore { width: 26px; padding: 0 0 0 6px; box-sizing: border-box; color: #333; font-size: 13px; }
  .addtab { margin: 3px 0 0 0; }
  .vdots {
    width: 2px;
    height: 11px;
    margin: 6px 13px 0 15px;
    background: repeating-linear-gradient(#aaa 0 2px, transparent 2px 4px);
  }
  .hscroll {
    width: 612px;
    height: 15px;
    margin-top: 4px;
    display: flex;
    background: #e0e0e0;
  }
  .hbtn {
    width: 15px;
    background: #fff;
    border: 1px solid #ccc;
    box-sizing: border-box;
    display: flex;
    align-items: center;
    justify-content: center;
  }
  .hbtn.right { background: #ececec; border: 0; width: 22px; }
  .hthumb {
    width: 530px;
    background: #fff;
    border: 1px solid #ccc;
    box-sizing: border-box;
  }
  .htrack { width: 45px; }

  /* status */
  .status {
    height: 24px;
    background: #f1f1f1;
    display: flex;
    align-items: center;
    font-size: 11px;
    color: #444;
    flex: none;
    border-top: 1px solid #dcdcdc;
    box-sizing: border-box;
    padding-right: 7px;
    position: relative;
  }
  .ready { margin: -3px 0 0 6px; }
  .calc { margin: -3px 0 0 12px; }
  .views {
    margin-left: auto;
    display: flex;
    height: 100%;
  }
  .view {
    width: 34px;
    display: flex;
    align-items: center;
    justify-content: center;
  }
  .view.on { background: #c6c6c6; }
  .zoom {
    display: flex;
    align-items: center;
    margin-left: 7px;
  }
  .minus { width: 8px; height: 2px; background: #555; }
  .slider {
    width: 104px;
    height: 1px;
    background: #aaa;
    margin: 0 3px 0 4px;
    position: relative;
  }
  .slider i {
    position: absolute;
    left: 49px;
    top: -6px;
    width: 5px;
    height: 13px;
    background: #666;
  }
  .pct100 { margin-left: 10px; width: 26px; white-space: nowrap; }
  .strip {
    position: absolute;
    left: 51px;
    bottom: 0;
    width: 357px;
    height: 2px;
    background: #fafafa;
    border-top: 1px solid #d8d8d8;
    box-sizing: border-box;
  }
</style>
